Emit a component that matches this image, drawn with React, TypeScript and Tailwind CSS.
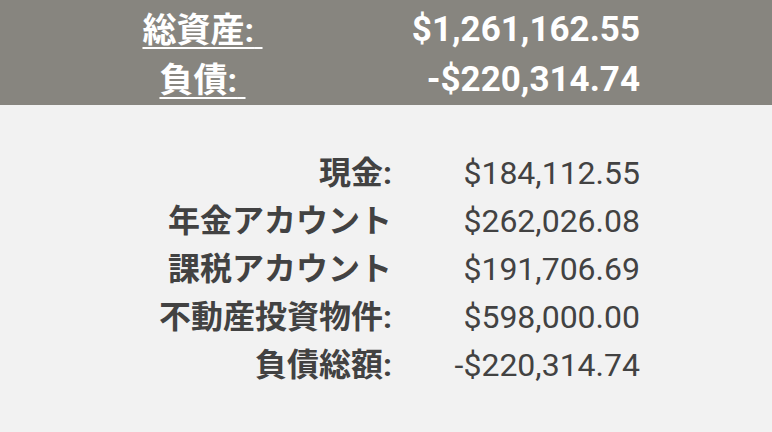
const summary = [
  { label: "総資産:", value: "$1,261,162.55" },
  { label: "負債:", value: "-$220,314.74" },
];

const rows = [
  { label: "現金:", value: "$184,112.55" },
  { label: "年金アカウント", value: "$262,026.08" },
  { label: "課税アカウント", value: "$191,706.69" },
  { label: "不動産投資物件:", value: "$598,000.00" },
  { label: "負債総額:", value: "-$220,314.74" },
];

export default function App() {
  return (
    <div
      className="w-[772px] h-[432px] bg-[#f2f2f2] overflow-hidden"
      style={{ fontFamily: "Roboto, 'Noto Sans CJK JP', sans-serif" }}
    >
      <div className="bg-[#87857f] pt-[5px] h-[105px]">
        {summary.map((item) => (
          <div key={item.label} className="grid grid-cols-[405px_235px] h-[50px] items-center text-white font-bold leading-[50px]">
            <div className="text-center text-[34px]">
              <span className="underline decoration-2 underline-offset-[5px]">{item.label}{"\u00a0"}</span>
            </div>
            <div className="text-right text-[35px]">{item.value}</div>
          </div>
        ))}
      </div>

      <div className="pt-[44px]">
        {rows.map((row) => (
          <div key={row.label} className="grid grid-cols-[392px_248px] h-[48px] items-center text-[#424242] text-[32px] leading-[48px]">
            <div className="text-right font-bold">{row.label}</div>
            <div className="text-right">{row.value}</div>
          </div>
        ))}
      </div>
    </div>
  );
}
